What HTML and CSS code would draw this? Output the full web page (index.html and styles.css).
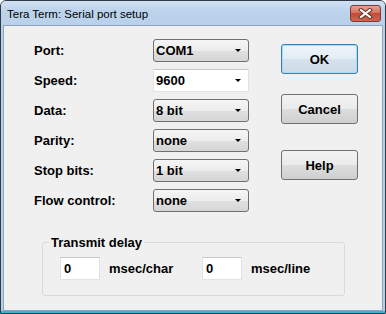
FILE: index.html
```html
<!DOCTYPE html>
<html lang="en">
<head>
    <meta charset="UTF-8">
    <title>Tera Term: Serial port setup</title>
    <link rel="stylesheet" href="styles.css">
</head>
<body>

    <div class="window">
        <div class="titlebar">
            <span class="title">Tera Term: Serial port setup</span>
            <span class="close">
                <svg width="15" height="11" viewBox="0 0 15 11">
                    <path d="M3 2 L12 9 M12 2 L3 9" stroke="#5a2a22" stroke-width="4" stroke-linecap="square"/>
                    <path d="M3 2 L12 9 M12 2 L3 9" stroke="#fff" stroke-width="2.2" stroke-linecap="square"/>
                </svg>
            </span>
        </div>

        <div class="client">
            <div class="main">
                <div class="form">
                    <div class="row">
                        <span class="label">Port:</span>
                        <div class="combo"><span>COM1</span><i class="arrow"></i></div>
                    </div>
                    <div class="row">
                        <span class="label">Speed:</span>
                        <div class="combo editable"><span>9600</span><i class="arrow"></i></div>
                    </div>
                    <div class="row">
                        <span class="label">Data:</span>
                        <div class="combo"><span>8 bit</span><i class="arrow"></i></div>
                    </div>
                    <div class="row">
                        <span class="label">Parity:</span>
                        <div class="combo"><span>none</span><i class="arrow"></i></div>
                    </div>
                    <div class="row">
                        <span class="label">Stop bits:</span>
                        <div class="combo"><span>1 bit</span><i class="arrow"></i></div>
                    </div>
                    <div class="row">
                        <span class="label">Flow control:</span>
                        <div class="combo"><span>none</span><i class="arrow"></i></div>
                    </div>
                </div>

                <div class="buttons">
                    <button class="btn btn-ok">OK</button>
                    <button class="btn btn-cancel">Cancel</button>
                    <button class="btn btn-help">Help</button>
                </div>
            </div>

            <fieldset class="group">
                <legend>Transmit delay</legend>
                <div class="delay-row">
                    <div class="edit">0</div>
                    <span class="unit">msec/char</span>
                    <div class="edit">0</div>
                    <span class="unit">msec/line</span>
                </div>
            </fieldset>
        </div>
    </div>

</body>
</html>
```

FILE: styles.css
```css
body {
    margin: 0;
    font-family: "Liberation Sans", Arial, sans-serif;
    background-color: #fff;
}
.window {
    box-sizing: border-box;
    width: 386px;
    height: 314px;
    border: 1px solid #2f3a45;
    border-radius: 6px 6px 0 0;
    padding: 0 2px 2px 2px;
    display: flex;
    flex-direction: column;
    background: linear-gradient(to top, #3eb2d6 0, #3eb2d6 2px, #b4cfe9 2px, #b9d1ea 100%);
}
.titlebar {
    height: 24px;
    margin: 0 -2px;
    padding-left: 6px;
    display: flex;
    align-items: center;
    background: linear-gradient(#d3e2f3, #bcd3ec 40%, #b9d1ea);
    border-radius: 5px 5px 0 0;
}
.title {
    flex: 1;
    font-size: 11.5px;
    color: #000;
    padding-top: 2px;
}
.close {
    align-self: flex-start;
    margin-top: 4px;
    margin-right: 4px;
    box-sizing: border-box;
    width: 31px;
    height: 17px;
    border: 1px solid #7d3b31;
    border-radius: 3px;
    background: linear-gradient(#e7a190, #d4735f 45%, #c24b36 50%, #d06550);
    display: flex;
    align-items: center;
    justify-content: center;
}
.close svg {
    display: block;
}
.client {
    flex: 1;
    border: 1px solid #8fa5bd;
    background-color: #f0f0f0;
    padding: 13px 0 0 30px;
}
.main {
    display: flex;
}
.form {
    display: flex;
    flex-direction: column;
    gap: 7px;
}
.row {
    display: flex;
    align-items: center;
    height: 23px;
}
.label {
    width: 119px;
    font-size: 13px;
    font-weight: bold;
}
.combo {
    box-sizing: border-box;
    width: 96px;
    height: 23px;
    border: 1px solid #707070;
    border-radius: 3px;
    background: linear-gradient(#f5f5f5, #ececec 50%, #e0e0e0 51%, #d6d6d6);
    display: flex;
    align-items: center;
    padding-left: 2px;
    font-size: 13px;
    font-weight: bold;
}
.combo span {
    flex: 1;
}
.combo.editable {
    background: #fff;
    border-color: #dfe2e6;
    border-top-color: #c4c8cd;
    border-radius: 0;
}
.arrow {
    width: 0;
    height: 0;
    border-left: 3px solid transparent;
    border-right: 3px solid transparent;
    border-top: 3px solid #000;
    margin-right: 7px;
}
.buttons {
    display: flex;
    flex-direction: column;
    margin-left: 32px;
}
.btn {
    box-sizing: border-box;
    width: 77px;
    height: 30px;
    border: 1px solid #707070;
    border-radius: 3px;
    background: linear-gradient(#f2f2f2, #ebebeb 50%, #dddddd 51%, #cfcfcf);
    font-family: "Liberation Sans", Arial, sans-serif;
    font-size: 13px;
    font-weight: bold;
    color: #000;
    padding: 0;
}
.btn-ok {
    margin-top: 5px;
    border-color: #3c7fb1;
    box-shadow: inset 0 0 0 1px #a7dcf7;
    background: linear-gradient(#eef5fa, #e3edf5 50%, #d6e3ee 51%, #cddbe7);
}
.btn-cancel {
    margin-top: 20px;
}
.btn-help {
    margin-top: 26px;
}
.group {
    box-sizing: border-box;
    width: 303px;
    margin: 23px 0 0 8px;
    padding: 0;
    border: 1px solid #d5dbe0;
    border-radius: 3px;
}
.group legend {
    margin-left: 6px;
    padding: 0 2px;
    font-size: 13px;
    font-weight: bold;
    line-height: 15px;
}
.delay-row {
    display: flex;
    align-items: center;
    margin-top: 7px;
    padding: 0 0 15px 17px;
}
.edit {
    box-sizing: border-box;
    width: 40px;
    height: 23px;
    border: 1px solid #dfe2e6;
    border-top-color: #c4c8cd;
    background-color: #fff;
    padding-left: 3px;
    line-height: 21px;
    font-size: 13px;
    font-weight: bold;
}
.unit {
    width: 102px;
    padding-left: 9px;
    box-sizing: border-box;
    font-size: 13px;
    font-weight: bold;
}
```
